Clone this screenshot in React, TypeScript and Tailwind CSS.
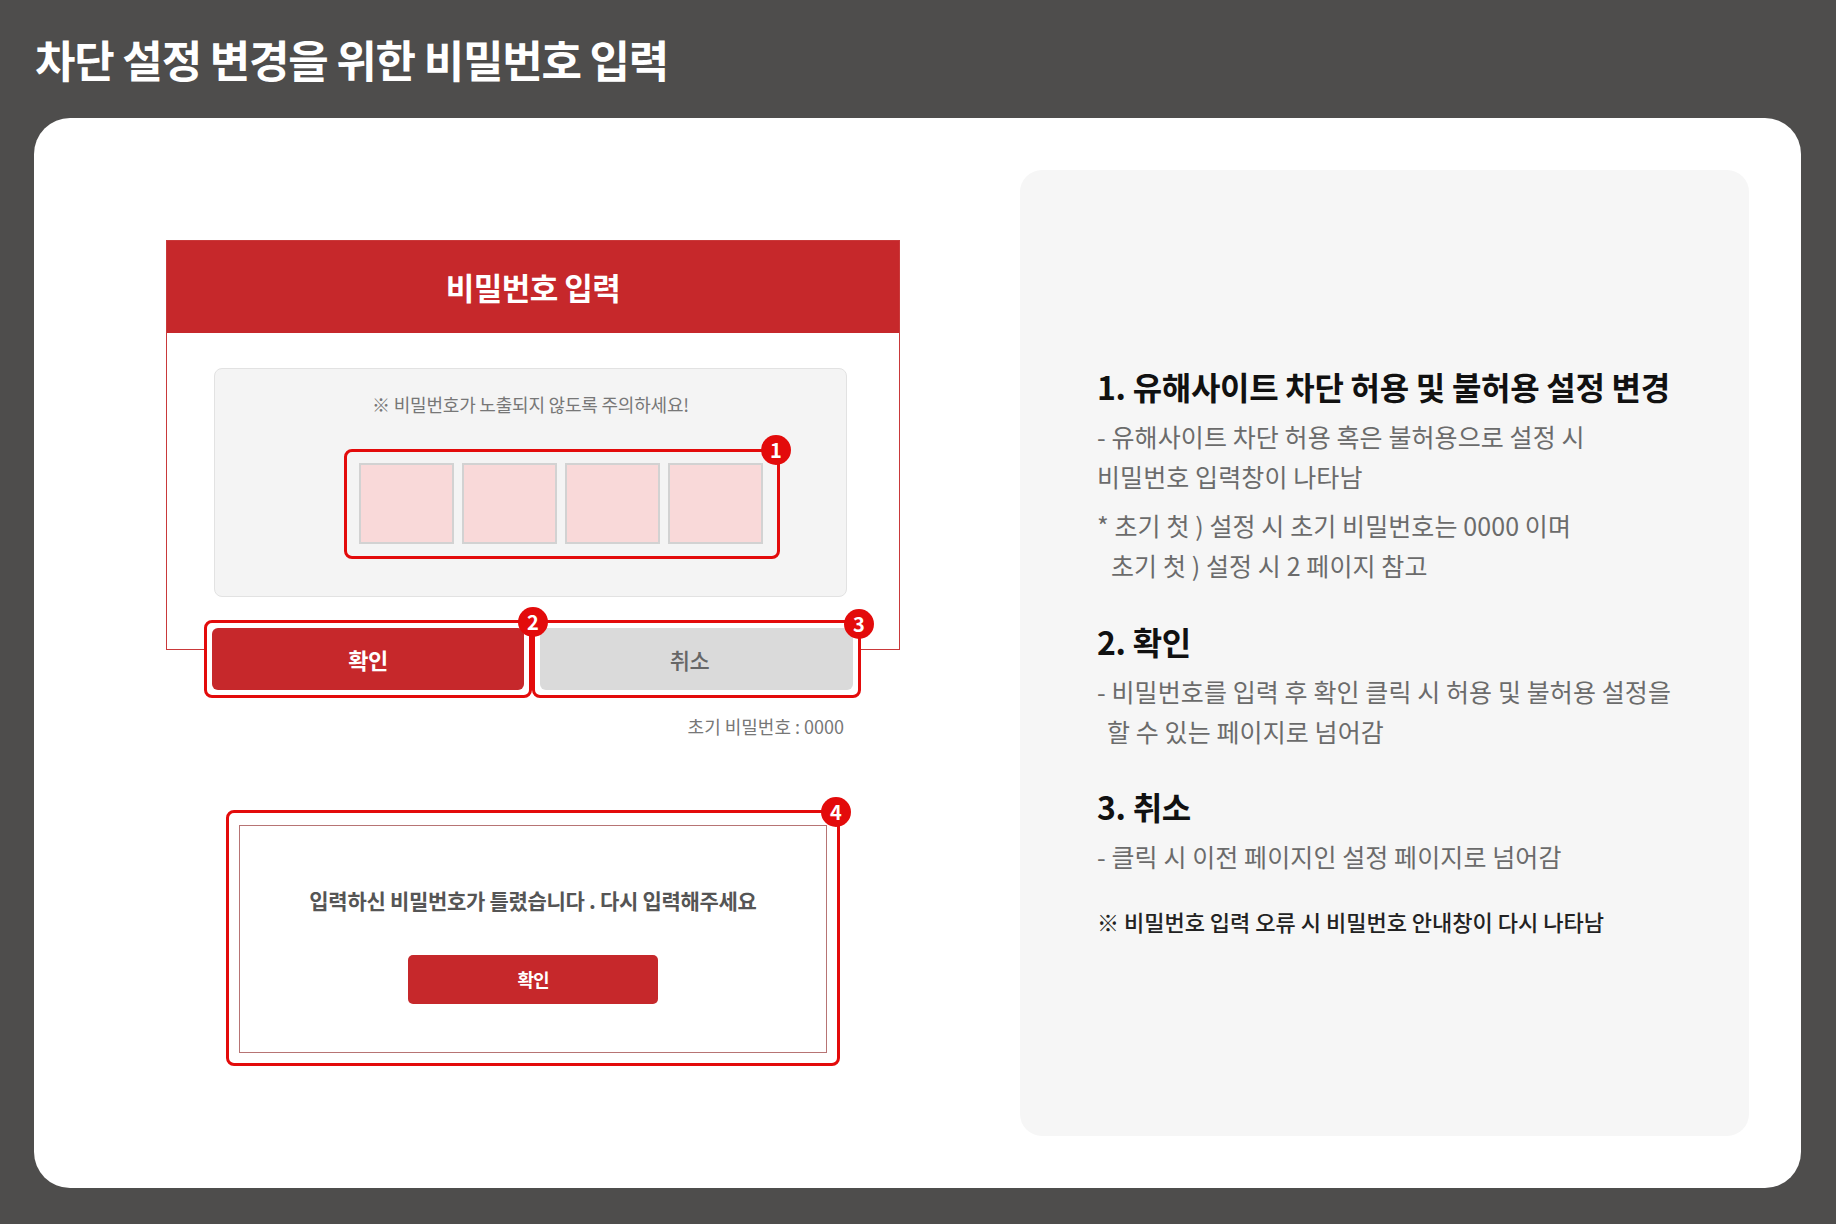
import type { ReactNode } from 'react'

function Badge({ n, className }: { n: number; className: string }) {
  return (
    <span
      className={`absolute flex h-[30px] w-[30px] items-center justify-center rounded-full bg-[#e30b0b] text-[20px] font-bold leading-none text-white ${className}`}
    >
      {n}
    </span>
  )
}

function Heading({ children, className = '' }: { children: ReactNode; className?: string }) {
  return (
    <h3 className={`text-[32px] font-bold leading-[40px] tracking-[-0.3px] text-[#111] ${className}`}>
      {children}
    </h3>
  )
}

function Line({ children, className = '' }: { children: ReactNode; className?: string }) {
  return (
    <p className={`text-[25px] leading-[40px] tracking-[0.1px] text-[#6b6b6b] ${className}`}>
      {children}
    </p>
  )
}

export default function App() {
  return (
    <div className="min-h-[1224px] w-[1836px] bg-[#4e4d4c] font-['Noto_Sans_CJK_KR','Noto_Sans',sans-serif]">
      {/* Page title */}
      <header className="flex h-[118px] items-center pl-[35px]">
        <h1 className="text-[44px] font-bold tracking-[-1.2px] text-white">
          차단 설정 변경을 위한 비밀번호 입력
        </h1>
      </header>

      {/* Card */}
      <div className="ml-[34px] mr-[35px] flex h-[1070px] gap-[40px] rounded-[36px] bg-white p-[52px]">
        {/* Left: screen mockup */}
        <div className="flex flex-1 items-center justify-center">
          <div className="relative w-[734px]">
            {/* Password dialog */}
            <div className="h-[410px] border border-[#c9393a] bg-white">
              <div className="flex h-[92px] items-center justify-center bg-[#c6282b] text-[31px] font-bold tracking-[-0.5px] text-white">
                비밀번호 입력
              </div>
              <div className="ml-[47px] mt-[35px] h-[229px] w-[633px] rounded-[8px] border border-[#e2e2e2] bg-[#f4f4f4]">
                <p className="pt-[24px] text-center text-[18px] leading-[22px] tracking-[-0.2px] text-[#777]">
                  ※ 비밀번호가 노출되지 않도록 주의하세요!
                </p>
                <div className="relative ml-[129px] mt-[34px] flex h-[110px] w-[436px] gap-[8px] rounded-[8px] border-[3px] border-[#e30b0b] pb-[13px] pl-[12px] pr-[13px] pt-[11px]">
                  {[0, 1, 2, 3].map((i) => (
                    <div key={i} className="h-[81px] w-[95px] border-2 border-[#d2d2d2] bg-[#f9d9d9]" />
                  ))}
                  <Badge n={1} className="-right-[14px] -top-[17px]" />
                </div>
              </div>
            </div>

            {/* Buttons */}
            <div className="relative -mt-[30px] ml-[38px] flex">
              <div className="relative flex h-[78px] w-[328px] rounded-[8px] border-[3px] border-[#e30b0b] bg-white p-[5px]">
                <button
                  type="button"
                  className="flex-1 rounded-[6px] bg-[#c6282b] text-[22px] font-bold tracking-[-0.5px] text-white"
                >
                  확인
                </button>
                <Badge n={2} className="-right-[19px] -top-[16px] z-10" />
              </div>
              <div className="relative flex h-[78px] w-[329px] rounded-[8px] border-[3px] border-[#e30b0b] bg-white p-[5px]">
                <button
                  type="button"
                  className="flex-1 rounded-[6px] bg-[#dadada] pr-[14px] text-[22px] font-medium tracking-[-0.5px] text-[#666]"
                >
                  취소
                </button>
                <Badge n={3} className="-right-[16px] -top-[14px]" />
              </div>
            </div>

            <p className="mt-[17px] pr-[56px] text-right text-[18px] leading-[22px] text-[#777]">
              초기 비밀번호 : 0000
            </p>

            {/* Error dialog */}
            <div className="relative ml-[60px] mt-[73px] h-[256px] w-[614px] rounded-[8px] border-[3px] border-[#e30b0b] bg-white px-[10px] pb-[10px] pt-[12px]">
              <div className="flex h-[228px] flex-col items-center border border-[#b77474]">
                <p className="pt-[60px] text-[21px] font-bold leading-[28px] tracking-[-0.3px] text-[#555]">
                  입력하신 비밀번호가 틀렸습니다 . 다시 입력해주세요
                </p>
                <button
                  type="button"
                  className="mt-[41px] h-[49px] w-[250px] rounded-[5px] bg-[#c6282b] text-[18px] font-bold tracking-[-1px] text-white"
                >
                  확인
                </button>
              </div>
              <Badge n={4} className="-right-[14px] -top-[16px]" />
            </div>
          </div>
        </div>

        {/* Right: description */}
        <div className="flex w-[729px] flex-col justify-center rounded-[22px] bg-[#f6f6f6] pl-[77px]">
          <Heading>1. 유해사이트 차단 허용 및 불허용 설정 변경</Heading>
          <Line className="mt-[10px]">- 유해사이트 차단 허용 혹은 불허용으로 설정 시</Line>
          <Line>비밀번호 입력창이 나타남</Line>
          <Line className="mt-[9px]">* 초기 첫 ) 설정 시 초기 비밀번호는 0000 이며</Line>
          <Line className="pl-[14px]">초기 첫 ) 설정 시 2 페이지 참고</Line>

          <Heading className="mt-[36px]">2. 확인</Heading>
          <Line className="mt-[10px]">- 비밀번호를 입력 후 확인 클릭 시 허용 및 불허용 설정을</Line>
          <Line className="pl-[10px]">할 수 있는 페이지로 넘어감</Line>

          <Heading className="mt-[35px]">3. 취소</Heading>
          <Line className="mt-[10px]">- 클릭 시 이전 페이지인 설정 페이지로 넘어감</Line>

          <p className="mt-[25px] text-[22px] font-medium leading-[40px] text-[#222]">
            ※ 비밀번호 입력 오류 시 비밀번호 안내창이 다시 나타남
          </p>
        </div>
      </div>
    </div>
  )
}
